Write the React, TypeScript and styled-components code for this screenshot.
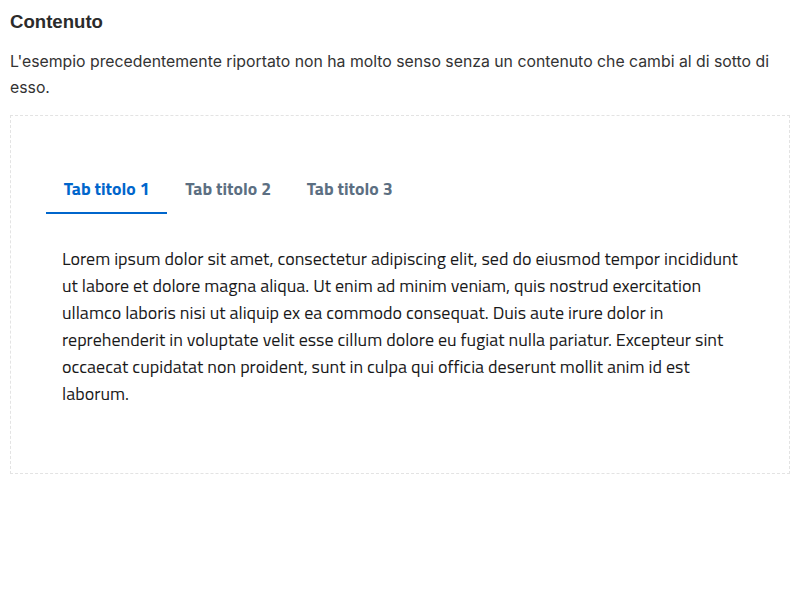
import React, { useState } from "react";
import styled, { createGlobalStyle } from "styled-components";

const Global = createGlobalStyle`
  html, body { margin: 0; padding: 0; background: #fff; }
  body { font-family: Inter, "Liberation Sans", sans-serif; }
`;

const Page = styled.div`
  padding: 11px 10px 0 10px;
`;

const Heading = styled.h4`
  margin: 0 0 16px 0;
  font-family: "Liberation Sans", Arial, sans-serif;
  font-weight: 700;
  font-size: 18.6px;
  line-height: 22px;
  color: #2b2b2b;
`;

const Intro = styled.p`
  margin: 0 0 14px 0;
  font-family: Inter, "Liberation Sans", sans-serif;
  font-size: 15.8px;
  line-height: 26px;
  color: #333;
`;

const Example = styled.div`
  border: 1px dashed #e3e3e3;
  padding: 48px 35px 66px 35px;
`;

const TabList = styled.div`
  display: flex;
`;

const Tab = styled.button<{ $active?: boolean }>`
  appearance: none;
  background: none;
  border: none;
  border-bottom: 2px solid ${(p) => (p.$active ? "#0066cc" : "transparent")};
  padding: 13px 17.8px 11px 17.8px;
  margin: 0;
  font-family: "Titillium Web", Roboto, sans-serif;
  font-weight: 700;
  font-size: 17.8px;
  line-height: 24px;
  color: ${(p) => (p.$active ? "#0066cc" : "#5c6f82")};
  cursor: pointer;
`;

const Panel = styled.div`
  padding: 31px 0 0 16px;
`;

const Body = styled.p`
  margin: 0;
  font-family: "Titillium Web", Roboto, sans-serif;
  font-size: 18px;
  line-height: 27px;
  color: #19191a;
`;

const tabs = ["Tab titolo 1", "Tab titolo 2", "Tab titolo 3"];

export default function App() {
  const [active, setActive] = useState(0);
  return (
    <Page>
      <Global />
      <Heading>Contenuto</Heading>
      <Intro>
        L'esempio precedentemente riportato non ha molto senso senza un contenuto che cambi al di sotto di esso.
      </Intro>
      <Example>
        <TabList>
          {tabs.map((t, i) => (
            <Tab key={t} $active={i === active} onClick={() => setActive(i)}>
              {t}
            </Tab>
          ))}
        </TabList>
        <Panel>
          <Body>
            Lorem ipsum dolor sit amet, consectetur adipiscing elit, sed do eiusmod tempor incididunt ut labore et
            dolore magna aliqua. Ut enim ad minim veniam, quis nostrud exercitation ullamco laboris nisi ut aliquip ex
            ea commodo consequat. Duis aute irure dolor in reprehenderit in voluptate velit esse cillum dolore eu
            fugiat nulla pariatur. Excepteur sint occaecat cupidatat non proident, sunt in culpa qui officia deserunt
            mollit anim id est laborum.
          </Body>
        </Panel>
      </Example>
    </Page>
  );
}
